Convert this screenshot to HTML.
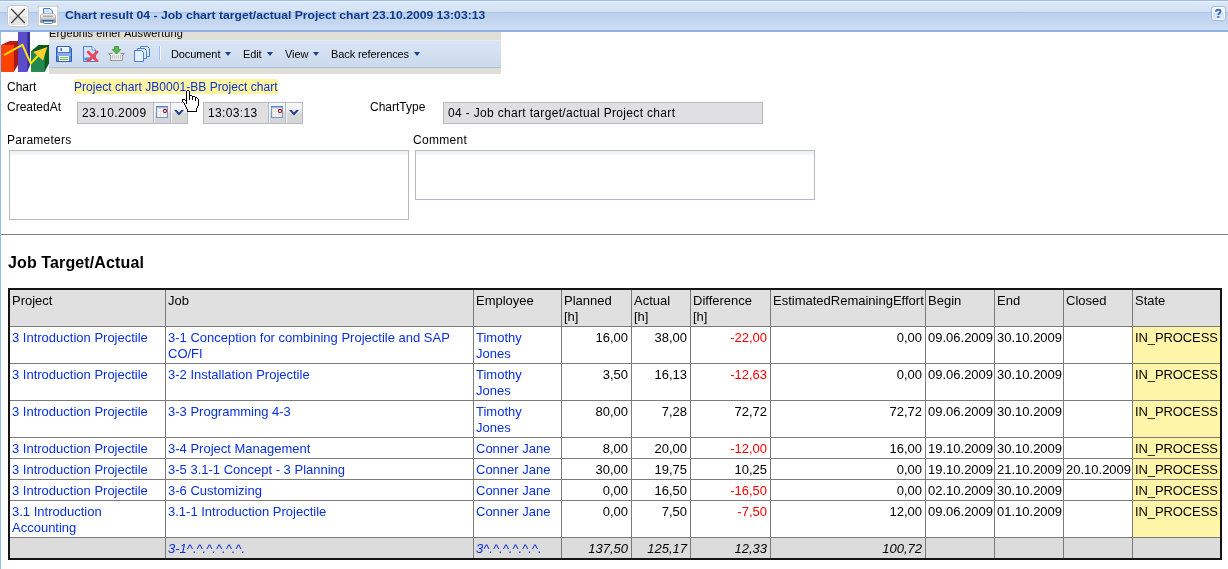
<!DOCTYPE html>
<html>
<head>
<meta charset="utf-8">
<title>Chart result</title>
<style>
html,body{margin:0;padding:0;}
#wrap{position:absolute;left:0;top:0;width:1228px;height:569px;overflow:hidden;will-change:transform;}
body{width:1228px;height:569px;overflow:hidden;background:#fff;position:relative;font-family:"Liberation Sans",sans-serif;font-size:12px;color:#000;}
.abs{position:absolute;}
#lborder{left:0;top:32px;width:1px;height:537px;background:#99bbe8;}
#lborder2{left:1px;top:32px;width:1px;height:538px;background:#dfe8f6;}
#title{left:0;top:0;width:1228px;height:32px;background:linear-gradient(#99bbe8 0px,#99bbe8 1px,#f0f5fc 1px,#f0f5fc 2px,#dce8f7 2px,#d3e1f3 12px,#a8c4ea 12px,#a8c4ea 13px,#bcd1ee 13px,#c3d6f0 21px,#cfdef4 30px,#8db2e3 30px,#8db2e3 32px);}
#title .hl{display:none}
#ttext{left:65px;top:8px;font-weight:bold;font-size:11px;line-height:14px;color:#0e3a88;white-space:nowrap;transform:scaleX(1.105);transform-origin:0 0;}
.tbtn{box-sizing:border-box;}
#gray1{left:49px;top:32px;width:452px;height:8px;background:#dfdfd8;overflow:hidden;}
#gray1 span{position:absolute;left:0px;top:-6px;letter-spacing:0.1px;font-size:11px;line-height:14px;white-space:nowrap;}
#tbar{left:49px;top:40px;width:452px;height:28px;box-sizing:border-box;border-top:1px solid #e4ecf8;border-bottom:1px solid #a9bfd3;background:linear-gradient(#d9e5f5,#ccdaee);}
#gray2{left:49px;top:68px;width:452px;height:6px;background:#dfdfd8;}
.mi{top:47px;letter-spacing:-0.1px;font-size:11px;line-height:14px;white-space:nowrap;}
.arr{top:52px;width:0;height:0;border-left:3px solid transparent;border-right:3px solid transparent;border-top:4px solid #15428b;}
.lbl{font-size:12px;line-height:14px;white-space:nowrap;}
.inp{box-sizing:border-box;border:1px solid #b5b8c8;background:#e0e0e0;height:22px;font-size:12px;line-height:14px;white-space:nowrap;overflow:hidden;}
.inp span{position:absolute;top:3px;}

.trg{top:103px;width:16px;height:20px;background:linear-gradient(#f6f6f6 0px,#ececec 8px,#d9d9d9 9px,#d3d3d3 20px);box-sizing:border-box;border-left:1px solid #f4f4f4;border-top:1px solid #fafafa;}
.vb{top:103px;width:1px;height:20px;background:#b5b8c8;}
.ta{box-sizing:border-box;border:1px solid #b5b8c8;background:linear-gradient(#eef0f0 0px,#f4f5f5 3px,#fff 5px);}
#h2{left:8px;top:254px;letter-spacing:0.12px;font-size:16px;font-weight:bold;line-height:18px;white-space:nowrap;}
#tbl{left:8px;top:288px;width:1214px;height:272px;box-sizing:border-box;border:2px solid #141414;background:#7b7b7b;font-size:13px;line-height:16px;}
.c{position:absolute;box-sizing:border-box;padding:3px 2px 0 2px;background:#fff;overflow:hidden;white-space:nowrap;}
.c.h{background:#e0e0e0;}
.c.l{color:#0a30dc;}
.c.n{text-align:right;padding-right:3px;}
.c.neg{color:#fa0000;}
.c.y{background:#fff5a8;letter-spacing:-0.1px;}
.c.t{background:#dcdcdc;font-style:italic;}
.gb{letter-spacing:0px;}
</style>
</head>
<body>
<div id="wrap">
<div class="abs" id="title"><div class="abs hl"></div></div>
<div class="abs" id="lborder"></div>
<div class="abs" id="ttext">Chart result 04 - Job chart target/actual Project chart 23.10.2009 13:03:13</div>

<!-- close button -->
<svg class="abs" style="left:7px;top:5px" width="22" height="22" viewBox="0 0 22 22">
 <defs><linearGradient id="gb1" x1="0" y1="0" x2="0" y2="1"><stop offset="0" stop-color="#f6f6f6"/><stop offset="0.5" stop-color="#efefef"/><stop offset="0.5" stop-color="#e0e0e0"/><stop offset="1" stop-color="#e6e6e6"/></linearGradient></defs>
 <rect x="0.500" y="0.500" width="21" height="21" rx="3.500" fill="#fff" stroke="#c2c2c0" stroke-width="0.900"/>
 <rect x="2" y="2" width="18" height="18" rx="1.500" fill="url(#gb1)"/>
 <path d="M4.300 4 L17.700 18 M17.700 4 L4.300 18" stroke="#3a3a3a" stroke-width="1.150" fill="none"/>
</svg>
<!-- print button -->
<svg class="abs" style="left:38px;top:6px" width="20" height="20" viewBox="0 0 20 20">
 <defs>
  <linearGradient id="gp" x1="0" y1="0" x2="0" y2="1"><stop offset="0" stop-color="#ffffff"/><stop offset="0.45" stop-color="#d8d8d8"/><stop offset="1" stop-color="#7a7a7a"/></linearGradient>
  <linearGradient id="gp2" x1="0" y1="0" x2="0" y2="1"><stop offset="0" stop-color="#e4e4e4"/><stop offset="1" stop-color="#b4b4b4"/></linearGradient>
 </defs>
 <rect x="0.500" y="0.500" width="19" height="19" fill="#fff" stroke="#d4d4ce"/>
 <path d="M5.500 9 V2.500 H12 L14.500 5 V9 Z" fill="#cfe3f9" stroke="#3f7fd8"/>
 <path d="M2.400 16.600 V10.500 Q2.400 7.600 5.200 7.600 H14.800 Q17.600 7.600 17.600 10.500 V16.600 Z" fill="url(#gp)" stroke="#8a8a8a" stroke-width="0.600"/>
 <rect x="5.300" y="9.700" width="9.400" height="1" fill="#6e6e6e"/>
 <rect x="5.300" y="10.700" width="9.400" height="3.300" fill="url(#gp2)"/>
 <rect x="4.600" y="14" width="10.800" height="1.100" fill="#4a4a4a"/>
 <path d="M5.500 15.200 V16.300 Q5.500 17.500 6.700 17.500 H13.300 Q14.500 17.500 14.500 16.300 V15.200 Z" fill="#f2f7fd" stroke="#3f7fd8"/>
</svg>
<!-- help -->
<svg class="abs" style="left:1211px;top:6px" width="15" height="15" viewBox="0 0 15 15">
 <defs><linearGradient id="gh" x1="0" y1="0" x2="0" y2="1"><stop offset="0" stop-color="#f4f8fe"/><stop offset="0.5" stop-color="#e6effb"/><stop offset="0.5" stop-color="#d3e3f8"/><stop offset="1" stop-color="#dfeafa"/></linearGradient></defs>
 <rect x="0.5" y="0.5" width="14" height="14" rx="2.5" fill="#fff" stroke="#9ab8e4"/>
 <rect x="2" y="2" width="11" height="11" fill="url(#gh)"/>
 <path d="M5 5.700 Q5 3.800 7.300 3.800 Q9.500 3.800 9.500 5.600 Q9.500 6.700 8.300 7.300 Q7.300 7.800 7.300 9.100" fill="none" stroke="#3f6fb0" stroke-width="2"/><rect x="6.300" y="10" width="2" height="1.800" fill="#3f6fb0"/>
</svg>

<!-- logo -->
<svg class="abs" style="left:1px;top:32px" width="48" height="41" viewBox="0 0 48 41">
 <polygon points="0.3,12.9 9,9 17,9 17,33 12.9,39.7 0.3,39.7" fill="#a81a1a"/>
 <polygon points="0.3,12.9 9,9 17,9 12.9,12.9" fill="#b81c14"/>
 <rect x="0.3" y="12.9" width="12.6" height="26.8" fill="#ff4200"/>
 <polygon points="17.1,0 29,0 29,33 26.4,39.7 17.1,39.7" fill="#34289a"/>
 <rect x="17.1" y="0" width="9.3" height="39.7" fill="#5c4cc8"/>
 <polygon points="30.2,19.2 37.4,12.9 48,12.9 48,31.4 43.7,39.7 30.2,39.7" fill="#0a5c1c"/>
 <rect x="30.2" y="19.2" width="13.5" height="20.500" fill="#208850"/>
 <polyline points="3.2,23 21.4,12.9 29.8,31.4 40,20.500" fill="none" stroke="#ffe800" stroke-width="2"/>
 <polygon points="46.3,15 32.3,20 42,28.500" fill="#ffd030"/>
</svg>

<div class="abs" id="gray1"><span>Ergebnis einer Auswertung</span></div>
<div class="abs" id="tbar"></div>
<div class="abs" id="gray2"></div>

<!-- toolbar icons -->
<svg class="abs" style="left:56px;top:46px" width="16" height="16" viewBox="0 0 16 16">
 <path d="M1.500 0.500 H13.500 L15.500 2.500 V15.500 H0.500 V1.500 Z" fill="#5a8edc" stroke="#2c60b6"/>
 <rect x="2" y="1" width="11" height="5" fill="#e9f1fc"/>
 <rect x="3" y="1" width="9" height="2" fill="#f8fbff"/>
 <rect x="4.500" y="2" width="1.500" height="3" fill="#3c6cc0"/>
 <rect x="1" y="6" width="14" height="1" fill="#4678cc"/>
 <rect x="1" y="7" width="14" height="3" fill="#86aee8"/>
 <rect x="3" y="10" width="10" height="5" fill="#fbfdf8"/>
 <rect x="4" y="11.200" width="8" height="1.100" fill="#7cba50"/>
 <rect x="4" y="13" width="8" height="1.100" fill="#7cba50"/>
</svg>
<svg class="abs" style="left:83px;top:46px" width="16" height="16" viewBox="0 0 16 16">
 <path d="M0.500 0.500 H9 L12.500 4 V15.500 H0.500 Z" fill="#d3e4f9" stroke="#4b82d2"/>
 <path d="M9 0.500 V4 H12.500" fill="#f4f8fe" stroke="#4b82d2" stroke-width="0.800"/>
 <rect x="1.500" y="11.500" width="7" height="3" fill="#4b8ae0"/>
 <path d="M5.200 6 L14 15 M14 6 L5.200 15" stroke="#f04656" stroke-width="2.800" stroke-linecap="round"/>
</svg>
<svg class="abs" style="left:108px;top:45px" width="17" height="17" viewBox="0 0 17 17">
 <path d="M6.500 1.500 H10.500 V4.500 H12.800 L8.500 9 L4.200 4.500 H6.500 Z" fill="#5cb848" stroke="#2f8f2a" stroke-width="0.800"/>
 <rect x="2.500" y="9" width="12" height="7" fill="#ededed"/>
 <path d="M0.500 8.500 H4.500 M12.500 8.500 H16.500 M0.800 9 L2.500 10.500 M16.200 9 L14.500 10.500" stroke="#8c8c8c" fill="none"/>
 <path d="M2.500 10 V15.500 H14.500 V10" stroke="#9a9a9a" fill="none"/>
 <path d="M4 11 H13.500 M4 13 H13.500" stroke="#a0a0a0" stroke-width="1" stroke-dasharray="1 1"/>
</svg>
<svg class="abs" style="left:134px;top:46px" width="17" height="16" viewBox="0 0 17 16">
 <path d="M6.500 0.500 H13.500 L15.500 2.500 V10.500 H6.500 Z" fill="#dbe9fa" stroke="#4b82d2"/>
 <path d="M3.500 2.500 H10.500 L12.500 4.500 V12.500 H3.500 Z" fill="#dbe9fa" stroke="#4b82d2"/>
 <path d="M0.500 4.500 H7.500 L9.500 6.500 V15.500 H0.500 Z" fill="#e6f0fc" stroke="#4b82d2"/>
</svg>
<div class="abs" style="left:159px;top:46px;width:1px;height:14px;background:#98c0f0"></div>
<div class="abs" style="left:160px;top:46px;width:1px;height:14px;background:#f4f8fd"></div>

<div class="abs mi" style="left:171px">Document</div><div class="abs arr" style="left:225px"></div>
<div class="abs mi" style="left:243px">Edit</div><div class="abs arr" style="left:267px"></div>
<div class="abs mi" style="left:285px">View</div><div class="abs arr" style="left:313px"></div>
<div class="abs mi" style="left:331px">Back references</div><div class="abs arr" style="left:414px"></div>

<!-- form -->
<div class="abs lbl" style="left:7px;top:80px">Chart</div>
<div class="abs lbl" id="clink" style="left:74px;letter-spacing:0.04px;top:79px;height:15px;background:#fff5a1;color:#0a30dc;line-height:16px;">Project chart JB0001-BB Project chart</div>
<div class="abs lbl" style="left:7px;top:100px">CreatedAt</div>
<div class="abs lbl" style="left:370px;top:100px">ChartType</div>

<div class="abs inp" style="left:77px;top:102px;width:111px"><span style="left:4px;letter-spacing:0.45px">23.10.2009</span></div>
<div class="abs inp" style="left:203px;top:102px;width:100px"><span style="left:4px;letter-spacing:0.35px">13:03:13</span></div>
<div class="abs inp" style="left:443px;top:102px;width:320px"><span style="left:4px;letter-spacing:0.33px">04 - Job chart target/actual Project chart</span></div>

<div class="abs vb" style="left:153px"></div><div class="abs trg" style="left:154px"></div><div class="abs vb" style="left:170px"></div><div class="abs trg" style="left:171px"></div><svg class="abs" style="left:156px;top:106px" width="12" height="12" viewBox="0 0 12 12" shape-rendering="crispEdges">
 <rect x="0" y="0" width="12" height="12" fill="#6f97d2"/>
 <rect x="0" y="0" width="12" height="1" fill="#5a84c6"/>
 <rect x="1" y="1" width="10" height="1" fill="#9dbce8"/>
 <rect x="1" y="2" width="10" height="9" fill="#e4e4e4"/>
 <rect x="2" y="3" width="2" height="2" fill="#fff"/><rect x="5" y="3" width="2" height="2" fill="#fff"/>
 <rect x="2" y="6" width="2" height="2" fill="#fff"/><rect x="5" y="6" width="2" height="2" fill="#fff"/><rect x="8" y="6" width="2" height="2" fill="#fff"/>
 <rect x="2" y="9" width="2" height="2" fill="#fff"/><rect x="5" y="9" width="2" height="2" fill="#fff"/><rect x="8" y="9" width="2" height="2" fill="#fff"/>
 <circle cx="9" cy="5" r="1.6" fill="#fff" stroke="#a01018" stroke-width="1.1" shape-rendering="auto"/>
</svg><svg class="abs" style="left:173.500px;top:110px" width="10" height="6" viewBox="0 0 10 6"><path d="M0 0 H2.600 L5 2.400 L7.400 0 H10 L5 5.400 Z" fill="#1f3f8f"/></svg><div class="abs vb" style="left:268px"></div><div class="abs trg" style="left:269px"></div><div class="abs vb" style="left:285px"></div><div class="abs trg" style="left:286px"></div><svg class="abs" style="left:271px;top:106px" width="12" height="12" viewBox="0 0 12 12" shape-rendering="crispEdges">
 <rect x="0" y="0" width="12" height="12" fill="#6f97d2"/>
 <rect x="0" y="0" width="12" height="1" fill="#5a84c6"/>
 <rect x="1" y="1" width="10" height="1" fill="#9dbce8"/>
 <rect x="1" y="2" width="10" height="9" fill="#e4e4e4"/>
 <rect x="2" y="3" width="2" height="2" fill="#fff"/><rect x="5" y="3" width="2" height="2" fill="#fff"/>
 <rect x="2" y="6" width="2" height="2" fill="#fff"/><rect x="5" y="6" width="2" height="2" fill="#fff"/><rect x="8" y="6" width="2" height="2" fill="#fff"/>
 <rect x="2" y="9" width="2" height="2" fill="#fff"/><rect x="5" y="9" width="2" height="2" fill="#fff"/><rect x="8" y="9" width="2" height="2" fill="#fff"/>
 <circle cx="9" cy="5" r="1.6" fill="#fff" stroke="#a01018" stroke-width="1.1" shape-rendering="auto"/>
</svg><svg class="abs" style="left:288.500px;top:110px" width="10" height="6" viewBox="0 0 10 6"><path d="M0 0 H2.600 L5 2.400 L7.400 0 H10 L5 5.400 Z" fill="#1f3f8f"/></svg><svg class="abs" style="left:182px;top:90px" width="17" height="22" viewBox="0 0 17 22" shape-rendering="crispEdges"><rect x="5" y="0" width="2" height="1" fill="#000"/><rect x="4" y="1" width="1" height="1" fill="#000"/><rect x="5" y="1" width="2" height="1" fill="#fff"/><rect x="7" y="1" width="1" height="1" fill="#000"/><rect x="4" y="2" width="1" height="1" fill="#000"/><rect x="5" y="2" width="2" height="1" fill="#fff"/><rect x="7" y="2" width="1" height="1" fill="#000"/><rect x="4" y="3" width="1" height="1" fill="#000"/><rect x="5" y="3" width="2" height="1" fill="#fff"/><rect x="7" y="3" width="1" height="1" fill="#000"/><rect x="4" y="4" width="1" height="1" fill="#000"/><rect x="5" y="4" width="2" height="1" fill="#fff"/><rect x="7" y="4" width="1" height="1" fill="#000"/><rect x="4" y="5" width="1" height="1" fill="#000"/><rect x="5" y="5" width="2" height="1" fill="#fff"/><rect x="7" y="5" width="3" height="1" fill="#000"/><rect x="4" y="6" width="1" height="1" fill="#000"/><rect x="5" y="6" width="2" height="1" fill="#fff"/><rect x="7" y="6" width="1" height="1" fill="#000"/><rect x="8" y="6" width="2" height="1" fill="#fff"/><rect x="10" y="6" width="3" height="1" fill="#000"/><rect x="4" y="7" width="1" height="1" fill="#000"/><rect x="5" y="7" width="2" height="1" fill="#fff"/><rect x="7" y="7" width="1" height="1" fill="#000"/><rect x="8" y="7" width="2" height="1" fill="#fff"/><rect x="10" y="7" width="1" height="1" fill="#000"/><rect x="11" y="7" width="2" height="1" fill="#fff"/><rect x="13" y="7" width="2" height="1" fill="#000"/><rect x="4" y="8" width="1" height="1" fill="#000"/><rect x="5" y="8" width="2" height="1" fill="#fff"/><rect x="7" y="8" width="1" height="1" fill="#000"/><rect x="8" y="8" width="2" height="1" fill="#fff"/><rect x="10" y="8" width="1" height="1" fill="#000"/><rect x="11" y="8" width="2" height="1" fill="#fff"/><rect x="13" y="8" width="1" height="1" fill="#000"/><rect x="14" y="8" width="1" height="1" fill="#fff"/><rect x="15" y="8" width="1" height="1" fill="#000"/><rect x="0" y="9" width="3" height="1" fill="#000"/><rect x="4" y="9" width="1" height="1" fill="#000"/><rect x="5" y="9" width="2" height="1" fill="#fff"/><rect x="7" y="9" width="1" height="1" fill="#000"/><rect x="8" y="9" width="2" height="1" fill="#fff"/><rect x="10" y="9" width="1" height="1" fill="#000"/><rect x="11" y="9" width="2" height="1" fill="#fff"/><rect x="13" y="9" width="1" height="1" fill="#000"/><rect x="14" y="9" width="2" height="1" fill="#fff"/><rect x="16" y="9" width="1" height="1" fill="#000"/><rect x="0" y="10" width="1" height="1" fill="#000"/><rect x="1" y="10" width="2" height="1" fill="#fff"/><rect x="3" y="10" width="2" height="1" fill="#000"/><rect x="5" y="10" width="8" height="1" fill="#fff"/><rect x="13" y="10" width="1" height="1" fill="#000"/><rect x="14" y="10" width="2" height="1" fill="#fff"/><rect x="16" y="10" width="1" height="1" fill="#000"/><rect x="0" y="11" width="1" height="1" fill="#000"/><rect x="1" y="11" width="3" height="1" fill="#fff"/><rect x="4" y="11" width="1" height="1" fill="#000"/><rect x="5" y="11" width="11" height="1" fill="#fff"/><rect x="16" y="11" width="1" height="1" fill="#000"/><rect x="1" y="12" width="1" height="1" fill="#000"/><rect x="2" y="12" width="2" height="1" fill="#fff"/><rect x="4" y="12" width="1" height="1" fill="#000"/><rect x="5" y="12" width="11" height="1" fill="#fff"/><rect x="16" y="12" width="1" height="1" fill="#000"/><rect x="2" y="13" width="1" height="1" fill="#000"/><rect x="3" y="13" width="1" height="1" fill="#fff"/><rect x="4" y="13" width="1" height="1" fill="#000"/><rect x="5" y="13" width="11" height="1" fill="#fff"/><rect x="16" y="13" width="1" height="1" fill="#000"/><rect x="2" y="14" width="1" height="1" fill="#000"/><rect x="3" y="14" width="13" height="1" fill="#fff"/><rect x="16" y="14" width="1" height="1" fill="#000"/><rect x="3" y="15" width="1" height="1" fill="#000"/><rect x="4" y="15" width="12" height="1" fill="#fff"/><rect x="16" y="15" width="1" height="1" fill="#000"/><rect x="3" y="16" width="1" height="1" fill="#000"/><rect x="4" y="16" width="11" height="1" fill="#fff"/><rect x="15" y="16" width="1" height="1" fill="#000"/><rect x="4" y="17" width="1" height="1" fill="#000"/><rect x="5" y="17" width="10" height="1" fill="#fff"/><rect x="15" y="17" width="1" height="1" fill="#000"/><rect x="4" y="18" width="1" height="1" fill="#000"/><rect x="5" y="18" width="9" height="1" fill="#fff"/><rect x="14" y="18" width="1" height="1" fill="#000"/><rect x="5" y="19" width="1" height="1" fill="#000"/><rect x="6" y="19" width="8" height="1" fill="#fff"/><rect x="14" y="19" width="1" height="1" fill="#000"/><rect x="5" y="20" width="1" height="1" fill="#000"/><rect x="6" y="20" width="8" height="1" fill="#fff"/><rect x="14" y="20" width="1" height="1" fill="#000"/><rect x="5" y="21" width="10" height="1" fill="#000"/></svg>
<div class="abs lbl" style="left:7px;top:133px;letter-spacing:0.25px">Parameters</div>
<div class="abs lbl" style="left:413px;top:133px;letter-spacing:0.3px">Comment</div>
<div class="abs ta" style="left:9px;top:150px;width:400px;height:70px"></div>
<div class="abs ta" style="left:415px;top:150px;width:400px;height:50px"></div>

<div class="abs" style="left:1px;top:234px;width:1227px;height:1px;background:#808080"></div>

<div class="abs" id="h2">Job Target/Actual</div>

<div class="abs" id="tbl">
<div class="c h" style="left:0px;top:0px;width:155px;height:36px">Project</div>
<div class="c h" style="left:156px;top:0px;width:307px;height:36px">Job</div>
<div class="c h" style="left:464px;top:0px;width:87px;height:36px">Employee</div>
<div class="c h" style="left:552px;top:0px;width:69px;height:36px">Planned<br>[h]</div>
<div class="c h" style="left:622px;top:0px;width:58px;height:36px">Actual<br>[h]</div>
<div class="c h" style="left:681px;top:0px;width:79px;height:36px">Difference<br>[h]</div>
<div class="c h" style="left:761px;top:0px;width:154px;height:36px">EstimatedRemainingEffort</div>
<div class="c h" style="left:916px;top:0px;width:68px;height:36px">Begin</div>
<div class="c h" style="left:985px;top:0px;width:68px;height:36px">End</div>
<div class="c h" style="left:1054px;top:0px;width:68px;height:36px">Closed</div>
<div class="c h" style="left:1123px;top:0px;width:87px;height:36px">State</div>
<div class="c l" style="left:0px;top:37px;width:155px;height:36px">3 Introduction Projectile</div>
<div class="c l" style="left:156px;top:37px;width:307px;height:36px">3-1 Conception for combining Projectile and SAP<br>CO/FI</div>
<div class="c l" style="left:464px;top:37px;width:87px;height:36px">Timothy<br>Jones</div>
<div class="c n" style="left:552px;top:37px;width:69px;height:36px">16,00</div>
<div class="c n" style="left:622px;top:37px;width:58px;height:36px">38,00</div>
<div class="c n neg" style="left:681px;top:37px;width:79px;height:36px">-22,00</div>
<div class="c n" style="left:761px;top:37px;width:154px;height:36px">0,00</div>
<div class="c " style="left:916px;top:37px;width:68px;height:36px">09.06.2009</div>
<div class="c " style="left:985px;top:37px;width:68px;height:36px">30.10.2009</div>
<div class="c " style="left:1054px;top:37px;width:68px;height:36px"></div>
<div class="c y" style="left:1123px;top:37px;width:87px;height:36px">IN_PROCESS</div>
<div class="c l" style="left:0px;top:74px;width:155px;height:36px">3 Introduction Projectile</div>
<div class="c l" style="left:156px;top:74px;width:307px;height:36px">3-2 Installation Projectile</div>
<div class="c l" style="left:464px;top:74px;width:87px;height:36px">Timothy<br>Jones</div>
<div class="c n" style="left:552px;top:74px;width:69px;height:36px">3,50</div>
<div class="c n" style="left:622px;top:74px;width:58px;height:36px">16,13</div>
<div class="c n neg" style="left:681px;top:74px;width:79px;height:36px">-12,63</div>
<div class="c n" style="left:761px;top:74px;width:154px;height:36px">0,00</div>
<div class="c " style="left:916px;top:74px;width:68px;height:36px">09.06.2009</div>
<div class="c " style="left:985px;top:74px;width:68px;height:36px">30.10.2009</div>
<div class="c " style="left:1054px;top:74px;width:68px;height:36px"></div>
<div class="c y" style="left:1123px;top:74px;width:87px;height:36px">IN_PROCESS</div>
<div class="c l" style="left:0px;top:111px;width:155px;height:36px">3 Introduction Projectile</div>
<div class="c l" style="left:156px;top:111px;width:307px;height:36px">3-3 Programming 4-3</div>
<div class="c l" style="left:464px;top:111px;width:87px;height:36px">Timothy<br>Jones</div>
<div class="c n" style="left:552px;top:111px;width:69px;height:36px">80,00</div>
<div class="c n" style="left:622px;top:111px;width:58px;height:36px">7,28</div>
<div class="c n" style="left:681px;top:111px;width:79px;height:36px">72,72</div>
<div class="c n" style="left:761px;top:111px;width:154px;height:36px">72,72</div>
<div class="c " style="left:916px;top:111px;width:68px;height:36px">09.06.2009</div>
<div class="c " style="left:985px;top:111px;width:68px;height:36px">30.10.2009</div>
<div class="c " style="left:1054px;top:111px;width:68px;height:36px"></div>
<div class="c y" style="left:1123px;top:111px;width:87px;height:36px">IN_PROCESS</div>
<div class="c l" style="left:0px;top:148px;width:155px;height:20px">3 Introduction Projectile</div>
<div class="c l" style="left:156px;top:148px;width:307px;height:20px">3-4 Project Management</div>
<div class="c l" style="left:464px;top:148px;width:87px;height:20px">Conner Jane</div>
<div class="c n" style="left:552px;top:148px;width:69px;height:20px">8,00</div>
<div class="c n" style="left:622px;top:148px;width:58px;height:20px">20,00</div>
<div class="c n neg" style="left:681px;top:148px;width:79px;height:20px">-12,00</div>
<div class="c n" style="left:761px;top:148px;width:154px;height:20px">16,00</div>
<div class="c " style="left:916px;top:148px;width:68px;height:20px">19.10.2009</div>
<div class="c " style="left:985px;top:148px;width:68px;height:20px">30.10.2009</div>
<div class="c " style="left:1054px;top:148px;width:68px;height:20px"></div>
<div class="c y" style="left:1123px;top:148px;width:87px;height:20px">IN_PROCESS</div>
<div class="c l" style="left:0px;top:169px;width:155px;height:20px">3 Introduction Projectile</div>
<div class="c l" style="left:156px;top:169px;width:307px;height:20px">3-5 3.1-1 Concept - 3 Planning</div>
<div class="c l" style="left:464px;top:169px;width:87px;height:20px">Conner Jane</div>
<div class="c n" style="left:552px;top:169px;width:69px;height:20px">30,00</div>
<div class="c n" style="left:622px;top:169px;width:58px;height:20px">19,75</div>
<div class="c n" style="left:681px;top:169px;width:79px;height:20px">10,25</div>
<div class="c n" style="left:761px;top:169px;width:154px;height:20px">0,00</div>
<div class="c " style="left:916px;top:169px;width:68px;height:20px">19.10.2009</div>
<div class="c " style="left:985px;top:169px;width:68px;height:20px">21.10.2009</div>
<div class="c " style="left:1054px;top:169px;width:68px;height:20px">20.10.2009</div>
<div class="c y" style="left:1123px;top:169px;width:87px;height:20px">IN_PROCESS</div>
<div class="c l" style="left:0px;top:190px;width:155px;height:20px">3 Introduction Projectile</div>
<div class="c l" style="left:156px;top:190px;width:307px;height:20px">3-6 Customizing</div>
<div class="c l" style="left:464px;top:190px;width:87px;height:20px">Conner Jane</div>
<div class="c n" style="left:552px;top:190px;width:69px;height:20px">0,00</div>
<div class="c n" style="left:622px;top:190px;width:58px;height:20px">16,50</div>
<div class="c n neg" style="left:681px;top:190px;width:79px;height:20px">-16,50</div>
<div class="c n" style="left:761px;top:190px;width:154px;height:20px">0,00</div>
<div class="c " style="left:916px;top:190px;width:68px;height:20px">02.10.2009</div>
<div class="c " style="left:985px;top:190px;width:68px;height:20px">30.10.2009</div>
<div class="c " style="left:1054px;top:190px;width:68px;height:20px"></div>
<div class="c y" style="left:1123px;top:190px;width:87px;height:20px">IN_PROCESS</div>
<div class="c l" style="left:0px;top:211px;width:155px;height:36px">3.1 Introduction<br>Accounting</div>
<div class="c l" style="left:156px;top:211px;width:307px;height:36px">3.1-1 Introduction Projectile</div>
<div class="c l" style="left:464px;top:211px;width:87px;height:36px">Conner Jane</div>
<div class="c n" style="left:552px;top:211px;width:69px;height:36px">0,00</div>
<div class="c n" style="left:622px;top:211px;width:58px;height:36px">7,50</div>
<div class="c n neg" style="left:681px;top:211px;width:79px;height:36px">-7,50</div>
<div class="c n" style="left:761px;top:211px;width:154px;height:36px">12,00</div>
<div class="c " style="left:916px;top:211px;width:68px;height:36px">09.06.2009</div>
<div class="c " style="left:985px;top:211px;width:68px;height:36px">01.10.2009</div>
<div class="c " style="left:1054px;top:211px;width:68px;height:36px"></div>
<div class="c y" style="left:1123px;top:211px;width:87px;height:36px">IN_PROCESS</div>
<div class="c t" style="left:0px;top:248px;width:155px;height:20px"></div>
<div class="c t l" style="left:156px;top:248px;width:307px;height:20px">3-1<span class="gb">^.^.^.^.^.^.</span></div>
<div class="c t l" style="left:464px;top:248px;width:87px;height:20px">3<span class="gb">^.^.^.^.^.^.</span></div>
<div class="c t n" style="left:552px;top:248px;width:69px;height:20px">137,50</div>
<div class="c t n" style="left:622px;top:248px;width:58px;height:20px">125,17</div>
<div class="c t n" style="left:681px;top:248px;width:79px;height:20px">12,33</div>
<div class="c t n" style="left:761px;top:248px;width:154px;height:20px">100,72</div>
<div class="c t" style="left:916px;top:248px;width:68px;height:20px"></div>
<div class="c t" style="left:985px;top:248px;width:68px;height:20px"></div>
<div class="c t" style="left:1054px;top:248px;width:68px;height:20px"></div>
<div class="c t" style="left:1123px;top:248px;width:87px;height:20px"></div>
</div>
</div>
</body>
</html>
